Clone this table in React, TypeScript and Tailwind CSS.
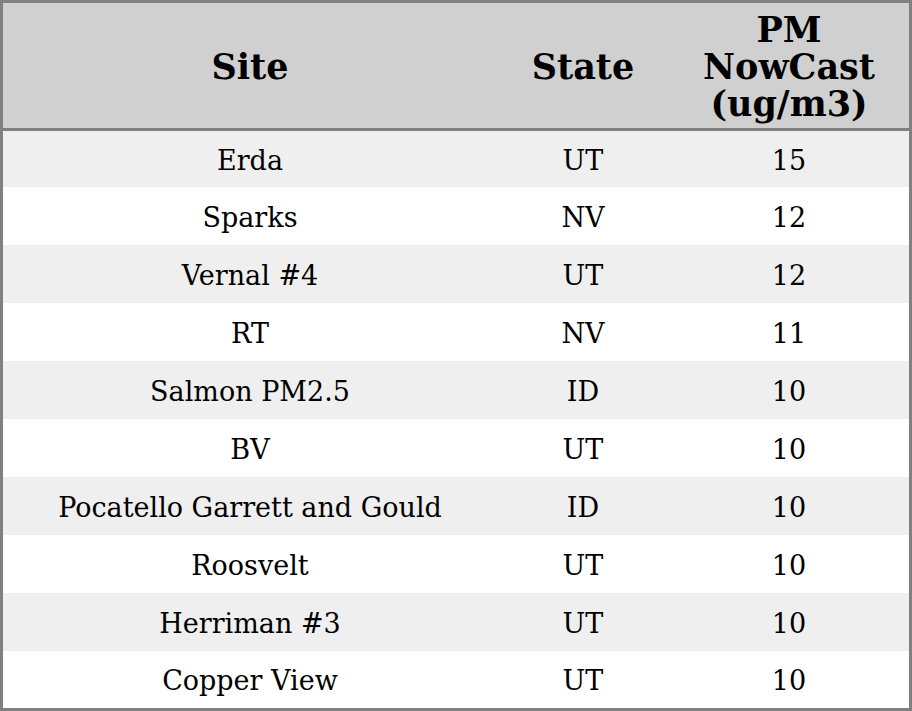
import React from 'react';

const rows: [string, string, string][] = [
    ['Erda', 'UT', '15'],
    ['Sparks', 'NV', '12'],
    ['Vernal #4', 'UT', '12'],
    ['RT', 'NV', '11'],
    ['Salmon PM2.5', 'ID', '10'],
    ['BV', 'UT', '10'],
    ['Pocatello Garrett and Gould', 'ID', '10'],
    ['Roosvelt', 'UT', '10'],
    ['Herriman #3', 'UT', '10'],
    ['Copper View', 'UT', '10'],
];

const heights = ['h-[56px]', 'h-[58px]', 'h-[58px]', 'h-[58px]', 'h-[58px]', 'h-[58px]', 'h-[58px]', 'h-[58px]', 'h-[58px]', 'h-[57px]'];

const App: React.FC = () => {
    return (
        <div className="w-[912px] h-[711px] bg-white font-['DejaVu_Serif',serif] text-black border-[3px] border-[#808080]">
            {/* Header */}
            <div className="grid grid-cols-[494px_172px_240px] h-[128px] pt-[2px] bg-[#d0d0d0] border-b-[3px] border-[#808080] text-[35px] leading-[37px] font-bold">
                <div className="flex items-center justify-center text-center">Site</div>
                <div className="flex items-center justify-center text-center">State</div>
                <div className="flex items-center justify-center text-center">
                    PM<br />NowCast<br />(ug/m3)
                </div>
            </div>

            {/* Rows */}
            {rows.map(([site, state, value], i) => (
                <div
                    key={site}
                    className={`grid grid-cols-[494px_172px_240px] pt-1 text-[27px] ${heights[i]} ${i % 2 === 0 ? 'bg-[#efefef]' : 'bg-white'}`}
                >
                    <div className="flex items-center justify-center">{site}</div>
                    <div className="flex items-center justify-center">{state}</div>
                    <div className="flex items-center justify-center">{value}</div>
                </div>
            ))}
        </div>
    );
};

export default App;
